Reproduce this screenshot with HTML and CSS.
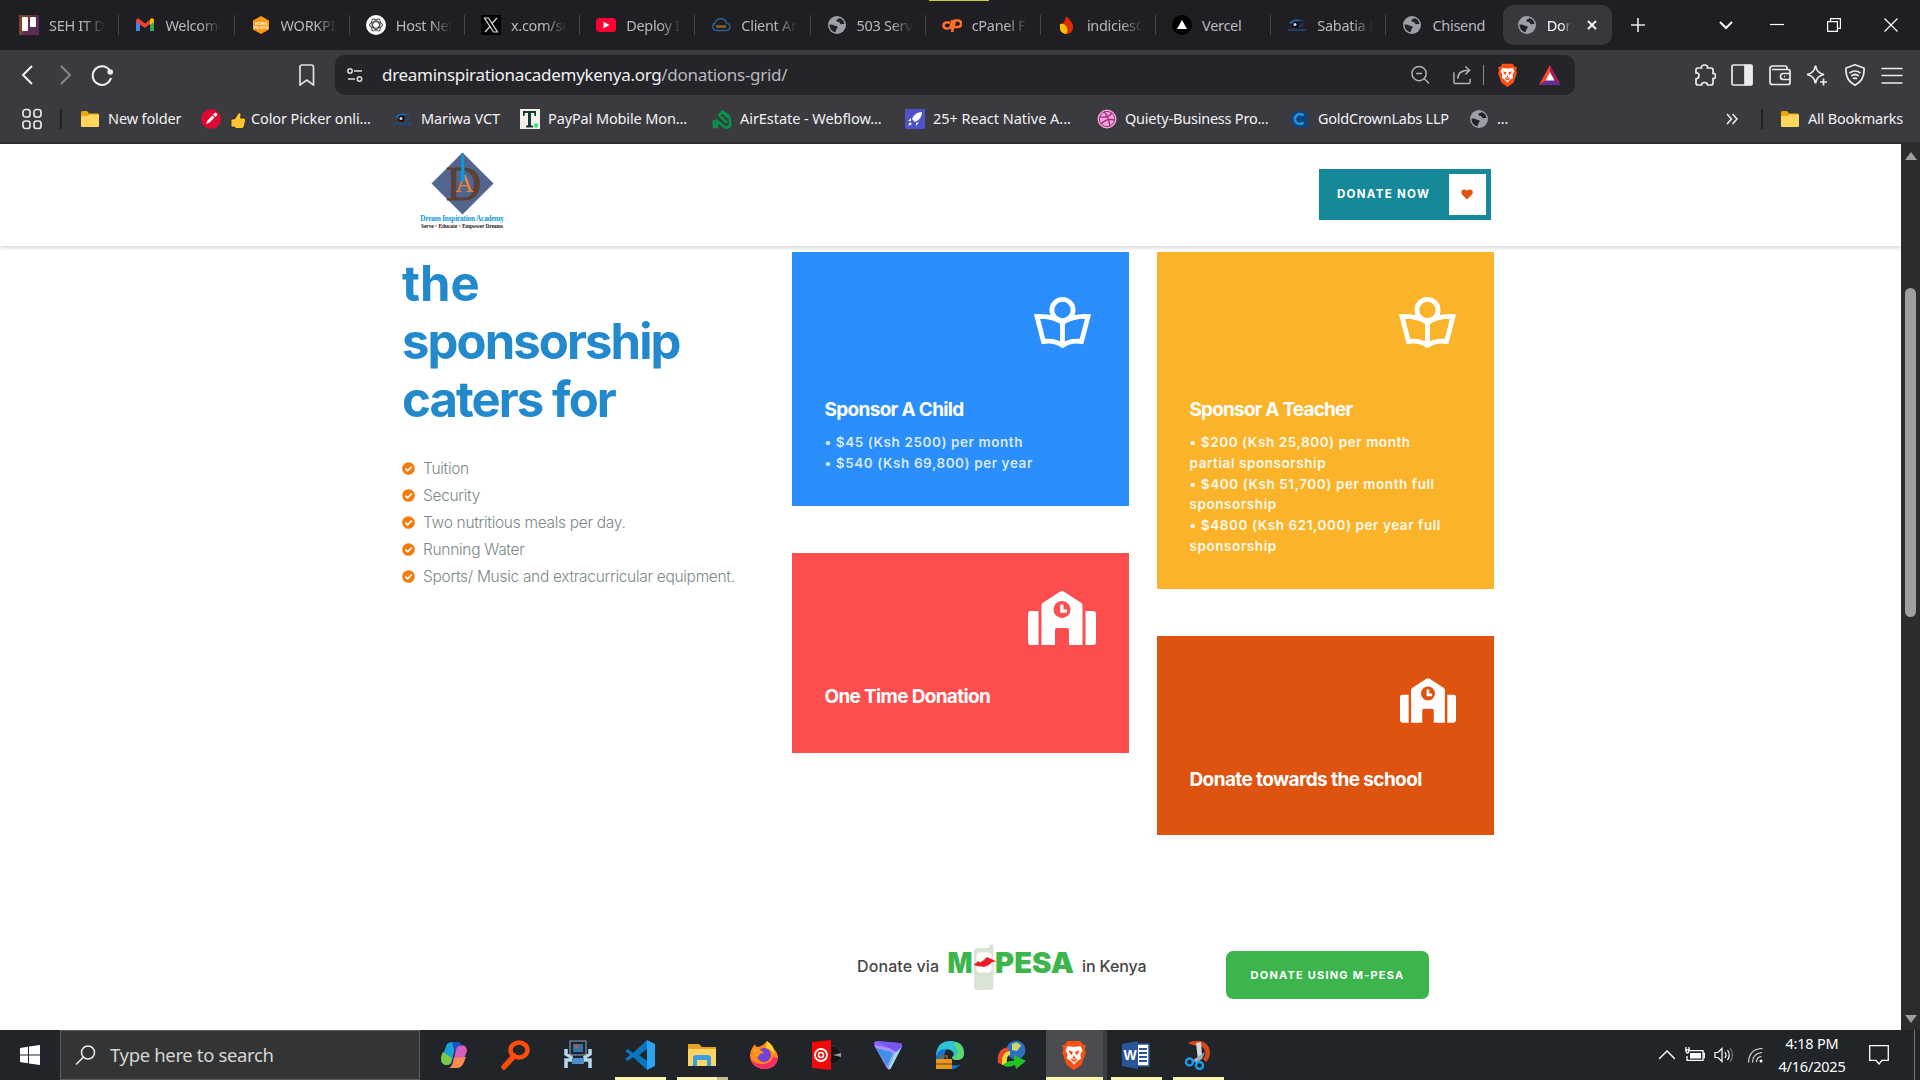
FILE: index.html
```html
<!DOCTYPE html>
<html lang="en">
<head>
<meta charset="utf-8">
<title>Donations Grid</title>
<link rel="stylesheet" href="styles.css">
</head>
<body>
<svg class="defs" aria-hidden="true">
  <symbol id="globe" viewBox="0 0 20 20"><circle cx="10" cy="10" r="9" fill="#9aa0a6"/><path d="M2.5 9.5c2 .2 4 0 5 1 .8.8 2.800.3 3.200 1.500.3 1.200-1.200 1.500-1.500 2.800-.2 1-.3 2-1 2.500A7.500 7.500 0 0 1 2.500 9.500zM12.500 3c-.5 1.200-2.500.8-3 2-.4 1.200.8 2 2 2 1.500.2 1.200 1.800 2.500 2.200 1.200.3 2.500-.5 3.500 0A7.500 7.500 0 0 0 12.500 3z" fill="#242329"/></symbol>
  <symbol id="folder" viewBox="0 0 20 20"><path d="M1 3.500Q1 2 2.500 2H7l2 2.500h9Q19 4.500 19 6v10.500q0 1.500-1.500 1.500h-15Q1 18 1 16.500z" fill="#e8a90c"/><path d="M1 8q0-1 1-1h6l2-1.500h8q1 0 1 1v10q0 1.500-1.500 1.500h-15Q1 18 1 16.500z" fill="#ffd75e"/></symbol>
  <symbol id="eye" viewBox="0 0 20 20"><path d="M2 8Q8 2 18 6 11 4 6 9z" fill="#1c6fc0"/><circle cx="8.500" cy="9.500" r="3.200" fill="#0b1118"/><circle cx="8" cy="9.500" r="1.500" fill="#d5dde3"/><path d="M12 11q3-1 5-4-1 5-5 5z" fill="#1c4f86"/><path d="M1 15h18" stroke="#1b4e86" stroke-width="1.500"/></symbol>
  <symbol id="book" viewBox="0 0 57 51"><g fill="none" stroke="#fff" stroke-width="4.800"><circle cx="28.500" cy="13" r="10.600"/><path d="M28.500 25.500Q19 19 3 19.500L9.500 44.500Q21 43 28.500 48.500 36 43 47.500 44.500L54 19.500Q38 19 28.500 25.500zM28.500 25v23"/></g></symbol>
  <symbol id="school" viewBox="0 0 68 54"><path fill="#fff" fill-rule="evenodd" d="M3 20h7.500v34H3q-3 0-3-3V23q0-3 3-3zM57.500 20H65q3 0 3 3v28q0 3-3 3h-7.500zM13.500 54V14.500q0-2 1.700-3.100L32 .7q2-1.200 4 0l16.800 10.700q1.700 1.100 1.700 3.100V54H41V39q0-2-2-2H29q-2 0-2 2v15zM34 10a8.500 8.500 0 1 0 0 17 8.500 8.500 0 0 0 0-17zM32.300 13.500h3.200v5h3.500v3.200h-6.700z"/></symbol>
  <symbol id="check" viewBox="0 0 14 14"><circle cx="7" cy="7" r="6.800" fill="#f57c0a"/><path d="M3.600 7.200 6 9.500l4.500-4.600" fill="none" stroke="#fff" stroke-width="1.900"/></symbol>
  <symbol id="lion" viewBox="0 0 24 28"><path d="M6 1h12l2 3 3 1-1 4 1 3-4 11-7 5-7-5L1 12l1-3-1-4 3-1z" fill="#fb4f14"/><path d="M6 5.500l4 .8h4l4-.8 2 4-2 4 .5 4-3.500 2-3 3.500-3-3.500-3.500-2 .5-4-2-4z" fill="#fff"/><path d="M7 9.500l4 1.500-1 3-2-1.500zM17 9.500 13 11l1 3 2-1.500zM12 14l1.500 3.500h-3zM8.500 17l3.500 1.500 3.500-1.500-2 3h-3z" fill="#fb4f14"/></symbol>
</svg>

<nav class="tabs">
  <div class="tab"><svg class="fav" viewBox="0 0 20 20"><path d="M0 0h20v20H0z" fill="#5b2a55"/><path d="M0 0h12L3 20H0z" fill="#7b4030"/><rect x="3" y="2" width="6" height="14" rx="1" fill="#fff"/><rect x="11" y="2" width="6" height="10" rx="1" fill="#fff"/></svg><span class="label">SEH IT D</span></div>
  <div class="tab"><svg class="fav" viewBox="0 0 20 20"><path d="M1 4v12h4V8z" fill="#4285f4"/><path d="M19 4v12h-4V8z" fill="#34a853"/><path d="M1 5.500 3 3l7 5.500L17 3v4.500L10 13 1 7z" fill="#ea4335"/><path d="M15 4.500Q18 2 19 5v2l-4 3z" fill="#fbbc04"/></svg><span class="label">Welcome</span></div>
  <div class="tab"><svg class="fav" viewBox="0 0 20 20"><path d="M10 1l8 4.500v9L10 19l-8-4.500v-9z" fill="#fb9a0c"/><text x="10" y="9.500" text-anchor="middle" class="fav-text">WORK</text><text x="10" y="14" text-anchor="middle" class="fav-text">PILOTS</text></svg><span class="label">WORKPI</span></div>
  <div class="tab"><svg class="fav" viewBox="0 0 20 20"><circle cx="10" cy="10" r="10" fill="#fff"/><g fill="none" stroke="#333" stroke-width="1"><ellipse cx="10" cy="10" rx="6.500" ry="3.300"/><ellipse cx="10" cy="10" rx="6.500" ry="3.300" transform="rotate(60 10 10)"/><ellipse cx="10" cy="10" rx="6.500" ry="3.300" transform="rotate(120 10 10)"/></g></svg><span class="label">Host Net</span></div>
  <div class="tab"><svg class="fav" viewBox="0 0 20 20"><path d="M0 0h20v20H0z"/><path d="M3.500 3h4l9 14h-4zM16 3l-5.500 6M4 17l5.500-6" fill="none" stroke="#ddd" stroke-width="1.200"/></svg><span class="label">x.com/se</span></div>
  <div class="tab"><svg class="fav" viewBox="0 0 20 20"><rect y="3" width="20" height="14" rx="3.500" fill="#ff0033"/><path d="M7.500 6.700v6.600l6-3.300z" fill="#fff"/></svg><span class="label">Deploy I</span></div>
  <div class="tab"><svg class="fav" viewBox="0 0 20 20"><path d="M5 15.500a4 4 0 0 1-1-7.500q2-4.500 6-4.500 4.500.5 5.500 4.500 3.500.8 3.500 4-.3 3-3.500 3.500z" fill="none" stroke="#2a628f" stroke-width="1.400"/><path d="M5 11.500h10" stroke="#946024" stroke-width="2.500"/></svg><span class="label">Client Ar</span></div>
  <div class="tab"><svg class="fav"><use href="#globe"/></svg><span class="label">503 Serv</span></div>
  <div class="tab"><svg class="fav" viewBox="0 0 20 20"><path d="M8 7.500H4.500a3 3 0 0 0 0 6H7M10 17l3-11.500h3a3.200 3.200 0 0 1 0 6.500h-3.500M8 14l2.500-9" fill="none" stroke="#ff6c2c" stroke-width="2.700"/></svg><span class="label">cPanel F</span></div>
  <div class="tab"><svg class="fav" viewBox="0 0 20 20"><path d="M9 1q8 7 7 12-1 6-7 6-6-1-6-6 0-3 3-5 3-3 3-7z" fill="#dd2c00"/><path d="M3 9q5-1 7 4 1 4-1 6-6-1-6-6z" fill="#ffc400"/></svg><span class="label">indiciesG</span></div>
  <div class="tab"><svg class="fav" viewBox="0 0 20 20"><circle cx="10" cy="10" r="10"/><path d="M10 5l5 9H5z" fill="#fff"/></svg><span class="label">Vercel</span></div>
  <div class="tab"><svg class="fav"><use href="#eye"/></svg><span class="label">Sabatia E</span></div>
  <div class="tab last"><svg class="fav"><use href="#globe"/></svg><span class="label">Chisend</span></div>
  <div class="tab active"><svg class="fav"><use href="#globe"/></svg><span class="label">Don</span><svg class="x" viewBox="0 0 10 10"><path d="M1 1l8 8M9 1 1 9" stroke="#fff" stroke-width="1.900"/></svg></div>
  <svg class="plus" viewBox="0 0 14 14"><path d="M7 0v14M0 7h14" stroke="#e8e8ea" stroke-width="1.600"/></svg>
  <div class="window-buttons">
    <svg viewBox="0 0 14 14"><path d="M1 4l6 6 6-6" fill="none" stroke="#fff" stroke-width="2"/></svg>
    <svg viewBox="0 0 14 14"><path d="M0 6.500h14" stroke="#fff" stroke-width="1.200"/></svg>
    <svg viewBox="0 0 14 14"><path d="M.6 3.600h9.800v9.800H.6zM3.500 3.500V.6h9.900v9.800h-3" fill="none" stroke="#fff" stroke-width="1.200"/></svg>
    <svg viewBox="0 0 14 14"><path d="M.5.500l13 13M13.500.500l-13 13" stroke="#fff" stroke-width="1.200"/></svg>
  </div>
  <i class="top-mark"></i>
</nav>

<section class="chrome">
  <div class="toolbar">
    <svg class="i-back" viewBox="0 0 22 22"><path d="M15 2 6 11l9 9" fill="none" stroke="#f0f0f2" stroke-width="2"/></svg>
    <svg class="i-fwd" viewBox="0 0 22 22"><path d="M7 2l9 9-9 9" fill="none" stroke="#86868b" stroke-width="2"/></svg>
    <svg class="i-reload" viewBox="0 0 22 22"><path d="M20 14a9.300 9.300 0 1 1-1.500-8" fill="none" stroke="#f0f0f2" stroke-width="2"/><circle cx="19.200" cy="8" r="2.800" fill="#f0f0f2"/></svg>
    <svg class="i-mark" viewBox="0 0 22 22"><path d="M4 3q0-2 2-2h9.500q2 0 2 2v18l-6.700-5L4 21z" fill="none" stroke="#e0e0e3" stroke-width="1.700"/></svg>
    <div class="omnibox">
      <svg class="i-tune" viewBox="0 0 16 16"><g fill="none" stroke="#dcdce0" stroke-width="1.500"><circle cx="3" cy="4" r="2.200"/><path d="M7 4h8M1 12h7"/><circle cx="12.500" cy="12" r="2.200"/></g></svg>
      <span class="url">dreaminspirationacademykenya.org<em>/donations-grid/</em></span>
      <svg class="i-zoom" viewBox="0 0 20 20"><g fill="none" stroke="#b4b4b9" stroke-width="1.500"><circle cx="8.500" cy="8.500" r="7.500"/><path d="M14 14l5 5M5.500 8.500h6"/></g></svg>
      <svg class="i-share" viewBox="0 0 20 20"><path d="M1 7v10q0 2 2 2h13q2 0 2-2v-3M5 14q0-9 12-9M13 1l4.500 4-4.500 4.500" fill="none" stroke="#b4b4b9" stroke-width="1.500"/></svg>
      <i class="omni-sep"></i>
      <svg class="i-lion"><use href="#lion"/></svg>
      <svg class="i-bat" viewBox="0 0 22 20"><path d="M11 0 0 20l11-7z" fill="#ff4724"/><path d="M11 0l11 20-11-7z" fill="#9e1f63"/><path d="M0 20h22l-11-7z" fill="#662d91"/><path d="M11 7l4.500 8.500h-9z" fill="#fff"/></svg>
    </div>
    <div class="tools">
      <svg viewBox="0 0 22 22"><path d="M2 6q0-2 2-2h3.500Q7 1 10.500 1 14 1 13.500 4H17q2 0 2 2v3.500q2.500-.3 2.500 2.500t-2.500 2.500V19q0 2-2 2h-3.500q0-2.500-3-2.500t-3 2.500H4q-2 0-2-2v-4q3-.5 3-3.500T2 9z"/></svg>
      <svg viewBox="0 0 22 22"><rect x="1" y="1" width="20" height="20" rx="1.500"/><path d="M14 1.500h6.500v19H14z" fill="#ececf0"/></svg>
      <svg viewBox="0 0 22 22"><path d="M18 5V4q0-2-2-2H4Q1 2 1 4.500V18q0 2.500 2.500 2.500H19q2 0 2-2V7.500q0-2-2-2H3M21 9.500h-7q-2.500 0-2.500 3t2.500 3h7M15 12.500h1"/></svg>
      <svg viewBox="0 0 22 22"><path d="M9.500 1.500Q10.500 9 18 10.500 10.500 12 9.500 19.500 8.500 12 1 10.500 8.500 9 9.500 1.500zM17.500 14.500v7M14 18h7"/></svg>
      <svg viewBox="0 0 22 22"><path d="M11 .8l9 3.200q1 12-9 17.200Q1 16 2 4zM5.500 9q5.500-4 11 0M7.300 12q3.700-3 7.400 0M9 14.800q2-1.500 4 0"/></svg>
      <svg viewBox="0 0 22 22"><path d="M.5 4.500h21M.5 11.500h21M.5 19h21"/></svg>
    </div>
  </div>
  <div class="bookmarks">
    <svg class="i-apps" viewBox="0 0 20 22"><g fill="none" stroke="#e6e6ea" stroke-width="1.700"><rect x="1" y="1.500" width="7" height="7.500" rx="2.500"/><rect x="12" y="1.500" width="7" height="7.500" rx="2.500"/><rect x="1" y="13" width="7" height="7.500" rx="2.500"/><rect x="12" y="13" width="7" height="7.500" rx="2.500"/></g></svg>
    <i class="bar-sep"></i>
    <div class="bm b1"><svg><use href="#folder"/></svg><span>New folder</span></div>
    <div class="bm b2"><svg viewBox="0 0 20 20"><circle cx="10" cy="10" r="10" fill="#dc0a33"/><path d="M5 15l1.500-3.500 5-5 2 2-5 5zM12 5.500l2.500-2 2 2-2 2.500z" fill="#fff"/></svg><svg class="thumb" viewBox="0 0 16 18"><path d="M1 8h3.500L9 1.500q3 0 1.500 5.500H14q2 .5 1.500 3l-1.500 6q-.5 1.500-2 1.500H6L4.500 16H1z" fill="#fcc531" stroke="#242329" stroke-width=".8"/></svg><span>Color Picker onli...</span></div>
    <div class="bm b3"><svg><use href="#eye"/></svg><span>Mariwa VCT</span></div>
    <div class="bm b4"><svg viewBox="0 0 20 20"><path d="M0 0h20v20H0z" fill="#f4f0ea"/><path d="M3 2h13v5h-1.500L14 4h-3v12l2 1v1.500H6V17l2-1V4H5l-.5 3H3z" fill="#123c34"/><circle cx="16" cy="16.500" r="2.200" fill="#36e07c"/></svg><span>PayPal Mobile Mon...</span></div>
    <div class="bm b5"><svg viewBox="0 0 20 20"><path d="M2 11v7h3v-6l9 7 4-2v-7L10 3 7 6l8 8M10 2l8 6" fill="none" stroke="#079449" stroke-width="2.600"/></svg><span>AirEstate - Webflow...</span></div>
    <div class="bm b6"><svg viewBox="0 0 20 20"><rect width="20" height="20" rx="1" fill="#5052c9"/><path d="M17 3q-7 0-10 7l3 3q7-3 7-10zM6 9l-3 3h3zM11 14v3l3-4zM5 13l-2 4 4-2z" fill="#fff"/></svg><span>25+ React Native A...</span></div>
    <div class="bm b7"><svg viewBox="0 0 20 20"><circle cx="10" cy="10" r="9" fill="#f3a6dc" stroke="#f5aee0"/><path d="M3 8q8 1 12-4M7 2.500q5 6 6 15M4 15q5-6 14-4" fill="none" stroke="#a62c80" stroke-width="1.300"/><circle cx="10" cy="10" r="7.600" fill="none" stroke="#a62c80"/></svg><span>Quiety-Business Pro...</span></div>
    <div class="bm b8"><svg viewBox="0 0 20 20"><circle cx="9.500" cy="10" r="9" fill="#0e4478"/><path d="M14 15h5v4h-5z" fill="#0e4478"/><path d="M13.500 6.500a5 5 0 1 0 0 7" fill="none" stroke="#2b8fe0" stroke-width="2.600"/></svg><span>GoldCrownLabs LLP</span></div>
    <div class="bm b9"><svg><use href="#globe"/></svg><span>...</span></div>
    <svg class="i-more" viewBox="0 0 12 12"><path d="M1 1l4.500 5L1 11M6.500 1 11 6l-4.500 5" fill="none" stroke="#eee" stroke-width="1.600"/></svg>
    <i class="bar-sep"></i>
    <div class="bm b10"><svg><use href="#folder"/></svg><span>All Bookmarks</span></div>
  </div>
</section>

<div class="viewport">
  <main class="page">
    <header class="site-header">
      <div class="logo">
        <svg viewBox="0 0 64 64"><path d="M32 .5 63.500 32 32 63.500.5 32z" fill="#52658f"/><text x="33" y="49" text-anchor="middle" class="logo-d">D</text><text x="34" y="40.500" text-anchor="middle" class="logo-a">A</text><path d="M31.200 1h1.800l1.500 28-4.500 1z" fill="#0a98de"/></svg>
        <span class="logo-name">Dream Inspiration Academy</span>
        <span class="logo-tag">Serve <b>•</b> Educate <b>•</b> Empower Dreams</span>
      </div>
      <a class="donate"><span>DONATE NOW</span><i><svg viewBox="0 0 12 11"><path d="M6 10.500 1 5.500Q-.5 3 1 1.300 3.500-.7 6 1.800 8.500-.7 11 1.300q1.500 1.700 0 4.200z" fill="#de5310"/></svg></i></a>
    </header>
    <div class="content">
      <aside class="intro">
        <h1><span class="the">the</span> sponsorship caters for</h1>
        <ul>
          <li><svg><use href="#check"/></svg><span>Tuition</span></li>
          <li><svg><use href="#check"/></svg><span>Security</span></li>
          <li><svg><use href="#check"/></svg><span>Two nutritious meals per day.</span></li>
          <li><svg><use href="#check"/></svg><span>Running Water</span></li>
          <li><svg><use href="#check"/></svg><span>Sports/ Music and extracurricular equipment.</span></li>
        </ul>
      </aside>
      <div class="column">
        <article class="card blue"><svg class="book"><use href="#book"/></svg><h2>Sponsor A Child</h2><p>• $45 (Ksh 2500) per month<br>• $540 (Ksh 69,800) per year</p></article>
        <article class="card red"><svg class="school"><use href="#school"/></svg><h2>One Time Donation</h2></article>
      </div>
      <div class="column">
        <article class="card yellow"><svg class="book"><use href="#book"/></svg><h2>Sponsor A Teacher</h2><p>• $200 (Ksh 25,800) per month<br>partial sponsorship<br>• $400 (Ksh 51,700) per month full<br>sponsorship<br>• $4800 (Ksh 621,000) per year full<br>sponsorship</p></article>
        <article class="card orange"><svg class="school"><use href="#school"/></svg><h2>Donate towards the school</h2></article>
      </div>
    </div>
    <footer class="mpesa">
      <span class="via">Donate via</span>
      <svg class="mpesa-logo" viewBox="0 0 127 46"><path d="M26 7q0-3 3-3h12.500V1.500Q41.500.5 43.500.5t2 1V43q0 3-3 3H29q-3 0-3-3z" fill="#d9e4d4"/><rect x="28.500" y="8.500" width="15" height="20" rx="3.500" fill="#fff"/><text x="-.5" y="29" class="mp" textLength="25" lengthAdjust="spacingAndGlyphs">M</text><text x="47" y="29" class="mp" textLength="79" lengthAdjust="spacingAndGlyphs">PESA</text><path d="M25.500 21l5-4 1.500 1.500q4-2 7-5.500 4 1.500 9.500 4.500l-4.500.5q-4 5-9 4.800-4 0-9.500-1.800z" fill="#ec1c24"/></svg>
      <span class="kenya">in Kenya</span>
      <a class="mpesa-btn">DONATE USING M-PESA</a>
    </footer>
  </main>
  <div class="scrollbar"><i class="up"></i><i class="bar"></i><i class="down"></i></div>
</div>

<div class="taskbar">
  <svg class="start" viewBox="0 0 20 20"><path d="M0 3l8-1.200v7.700H0zM9 1.600 20 0v9.500H9zM0 10.500h8v7.700L0 17zM9 10.500h11V20L9 18.400z" fill="#fff"/></svg>
  <div class="search"><svg viewBox="0 0 20 20"><circle cx="12.500" cy="7.500" r="6.500" fill="none" stroke="#eee" stroke-width="1.500"/><path d="M8 12l-7.500 7.500" stroke="#eee" stroke-width="1.500"/></svg><span>Type here to search</span></div>
  <div class="apps">
    <div class="app"><svg viewBox="0 0 30 30"><path d="M8 4q2-2 5-2h7q-3 1-4 6l-3 13q-1 4-5 4-6 0-6-6z" fill="#18a0dc"/><path d="M2 18q1-5 2-6l9 6-1 4q-1 3-4 3-6 0-6-7z" fill="#7cc84a"/><path d="M22 26q-2 2-5 2h-7q3-1 4-6l3-13q1-4 5-4 6 0 6 6z" fill="#d65cc0"/><path d="M10 28q3-1 4-6l1-4 12-1-2 5q-2 6-8 6z" fill="#fb8b4e"/><path d="M13 2h6q3 0 4 4-5-1-6 4l-1 3z" fill="#1f50bf"/></svg></div>
    <div class="app"><svg viewBox="0 0 30 30"><ellipse cx="18" cy="10" rx="8.500" ry="7.500" fill="none" stroke="#ff4b0c" stroke-width="4.500"/><path d="M13 16 3 27" stroke="#ff4b0c" stroke-width="5.500" stroke-linecap="round"/></svg></div>
    <div class="app"><svg viewBox="0 0 30 30"><path d="M3 9v5l5 3v3H3v8M27 9v5l-5 3v3h5v8" fill="none" stroke="#b8d8f2" stroke-width="3.500"/><rect x="7" y="1" width="16" height="14" fill="#1c2530" stroke="#94a5b8"/><path d="M10 4h10v8H10z" fill="#3474a4"/><path d="M12 5h3v3h-3z" fill="#df4b32"/><path d="M9 18h12v6H9z" fill="#4d8bc9"/></svg></div>
    <div class="app on"><svg viewBox="0 0 30 30"><path d="M22 0 8 13 3 9 0 11l5 4-5 4 3 2 5-4 14 13z" fill="#0a75c0"/><path d="M22 0l8 4v22l-8 4z" fill="#2ba4f0"/><path d="M22 9v12l-8-6z" fill="#212428"/></svg></div>
    <div class="app on multi"><svg viewBox="0 0 30 30"><path d="M1 4h11l3 3h14v19H1z" fill="#e8a420"/><path d="M1 9h28v17H1z" fill="#fdd567"/><path d="M6 26v-8q0-3 3-3h12q3 0 3 3v8h-4v-6H10v6z" fill="#3c9de0"/></svg></div>
    <div class="app"><svg viewBox="0 0 30 30"><path d="M18 1q6 4 7 8 4 4 4 9-1 10-13 11Q2 28 1 16q0-6 5-12 0 3 3 3 5-1 9-6z" fill="#ff8b16"/><path d="M1 16q2 8 12 8 9 0 11-7l5 1q-1 10-13 11Q2 28 1 16z" fill="#f82d66"/><circle cx="15" cy="15" r="7" fill="#7540d3"/><path d="M18 1q8 6 7 14-2-6-8-7z" fill="#ffd936"/><path d="M4 9q6-1 11 4-5 0-6 4-4-2-5-8z" fill="#ff9b14"/></svg></div>
    <div class="app"><svg viewBox="0 0 30 30"><circle cx="21" cy="15" r="9" fill="#151515" stroke="#333"/><path d="M22 15l8-2v4z" fill="#999"/><path d="M1 2 20 0v30L1 28z" fill="#f50808"/><circle cx="10" cy="15" r="6" fill="none" stroke="#fff" stroke-width="1.800"/><circle cx="10" cy="15" r="2.500" fill="none" stroke="#fff" stroke-width="1.600"/></svg></div>
    <div class="app"><svg viewBox="0 0 30 30"><path d="M1 4q0-3 3-3l22 2q4 0 3 4L18 28q-2 3-4 0z" fill="#8468f8"/><path d="M1 5l20 4q3 1 2 4l-6 15q-2 1-3 0z" fill="#a794ff"/><path d="M3 8l15 4q2 1 1 3l-5 11z" fill="#3e8fe8"/><path d="M29 6 18 28q-1 2-3 1l7-16z" fill="#8fe8e0"/><path d="M4 1l22 2q4 0 3 4l-6 5z" fill="#7656f0"/></svg></div>
    <div class="app"><svg viewBox="0 0 30 30"><path d="M1 14Q3 0 17 1q12 1 12 12 0 7-7 7-5 0-5-3 3-2 1-5-3-4-9-2Q3 12 1 18z" fill="#2fc1d8"/><path d="M20 2q9 3 9 11 0 7-7 7-5 0-5-3 4 1 5-4t-3-8z" fill="#5fd96c"/><path d="M1 16Q4 8 11 10q-5 9 3 14 6 3 12 0-5 6-11 5Q2 28 1 16z" fill="#1377cf"/><rect x="1" y="19" width="16" height="10" fill="#e6971e"/><path d="M6 19v-3h6v3M1 24h16" fill="none" stroke="#9c5c10" stroke-width="1.500"/></svg></div>
    <div class="app"><svg viewBox="0 0 30 30"><circle cx="19" cy="10" r="9.500" fill="#2c6ec2"/><path d="M15 4q6-4 9 2l-4 5-5-1z" fill="#cad96a"/><path d="M1 23Q-1 9 11 7l1 4Q5 13 6 25z" fill="#e24a28"/><path d="M5 25Q4 12 13 11v4Q9 15 10 24z" fill="#f7d53a"/><path d="M7 24q5-4 10-3v-6l12 6-10 8-1-4q-6 3-11 1z" fill="#22c425"/></svg></div>
    <div class="app on focus"><svg class="task-lion"><use href="#lion"/></svg></div>
    <div class="app on"><svg viewBox="0 0 30 30"><path d="M15 4h13v22H15z" fill="#fff" stroke="#2a5699" stroke-width="1.500"/><path d="M18 9h8M18 13h8M18 17h8M18 21h8" stroke="#2a5699" stroke-width="2"/><path d="M1 4 17 1v28L1 26z" fill="#2a5699"/><text x="9" y="20" text-anchor="middle" class="word-w">W</text></svg></div>
    <div class="app on"><svg viewBox="0 0 30 30"><path d="M5 3Q10 0 18 1q9 3 9 11 0 6-4 10l-3-3q3-4 2-8-2-5-6-5Q8 5 5 3z" fill="#d64818"/><path d="M13 3l5-1 1 13-4 5z" fill="#d4d9dd"/><path d="M10 20l12-8-3 7-6 4z" fill="#9faab2"/><g fill="none" stroke="#1d9bea" stroke-width="2.500"><circle cx="6.500" cy="22" r="3.500"/><circle cx="16.500" cy="25.500" r="3.500"/></g></svg></div>
  </div>
  <div class="tray">
    <svg class="t-up" viewBox="0 0 16 16"><path d="M0 12l8-8 8 8" fill="none" stroke="#fff" stroke-width="1.400"/></svg>
    <svg class="t-bat" viewBox="0 0 20 16"><path d="M5 3.700h13v9.600H2V9M18 6.500h1.500v4H18M0 3h5M1 0v3M4 0v3M1 3q0 3 1.500 3T4 3" fill="none" stroke="#fff" stroke-width="1.300"/><path d="M5 6h11v5.500H5z" fill="#fff"/></svg>
    <svg class="t-vol" viewBox="0 0 20 16"><path d="M1 5.500h3l4-4v13l-4-4H1zM11 5q2 3 0 6M13.500 3q3.500 5 0 10" fill="none" stroke="#fff" stroke-width="1.200"/><path d="M16 1q5 7 0 14" fill="none" stroke="#777" stroke-width="1.200"/></svg>
    <svg class="t-wifi" viewBox="0 0 16 16"><circle cx="14" cy="14" r="1.500" fill="#fff"/><path d="M9.500 15q0-5 5-5.500M5.500 15.500q0-9 9.500-10M1.500 15.500Q2 2 15.500 1.500" fill="none" stroke="#ddd" stroke-width="1.200"/></svg>
    <div class="clock"><span>4:18 PM</span><span>4/16/2025</span></div>
    <svg class="t-note" viewBox="0 0 20 20"><path d="M.7.700h18.600v14.600H13L10 19l-3-3.700H.7z" fill="none" stroke="#fff" stroke-width="1.300"/></svg>
    <i class="peek"></i>
  </div>
</div>
</body>
</html>
```
FILE: styles.css
```css
* { box-sizing: border-box; }
body { margin: 0; width: 1920px; height: 1080px; overflow: hidden; display: flex; flex-direction: column; background: #fff; font-family: "Noto Sans", "Open Sans", sans-serif; }
svg { flex: none; display: block; }
.defs { position: absolute; width: 0; height: 0; }

/* Tab strip */
.tabs { position: relative; height: 50px; flex: none; display: flex; align-items: center; background: #1f1e23; color: #b9b9bd; font-size: 14.500px; }
.tab { width: 115.200px; height: 40px; padding-left: 19px; display: flex; align-items: center; gap: 10px; position: relative; flex: none; }
.tab:first-child { width: 116.400px; }
.tab::after { content: ""; position: absolute; right: -3px; top: 10px; width: 1px; height: 20px; background: #46454b; }
.tab.last::after, .tab.active::after { display: none; }
.fav { width: 20px; height: 20px; }
.fav-text { font: bold 4px "Liberation Sans", sans-serif; fill: #fff; }
.label { width: 56px; margin-top: -1px; overflow: hidden; white-space: nowrap; letter-spacing: -0.300px; -webkit-mask-image: linear-gradient(90deg, #000 62%, transparent); mask-image: linear-gradient(90deg, #000 62%, transparent); }
.tab:nth-child(11) .label, .tab.last .label { -webkit-mask-image: none; mask-image: none; }
.tab.active { width: 109px; margin-left: 4.200px; padding-left: 14px; border-radius: 10px; background: #38373c; color: #fff; }
.tab.active .label { width: 24px; }
.x { width: 10px; height: 10px; margin-left: 6px; }
.plus { width: 14px; height: 14px; margin-left: 19px; }
.window-buttons { display: flex; gap: 43px; margin-left: auto; padding-right: 22px; }
.window-buttons svg { width: 14px; height: 14px; }
.window-buttons svg:first-child { margin-right: -6px; }
.top-mark { position: absolute; left: 929px; top: 0; width: 60px; height: 1px; background: #c8d02a; }

/* Toolbar and bookmarks */
.chrome { height: 94px; flex: none; background: #3b3a3f; border-bottom: 2px solid #2d2c32; color: #f2f2f4; }
.toolbar { height: 50px; padding: 5px 17px 5px 17px; display: flex; align-items: center; }
.i-back, .i-fwd, .i-reload, .i-mark { width: 22px; height: 22px; }
.i-fwd { margin-left: 15px; }
.i-reload { margin-left: 15px; }
.i-mark { margin-left: 183px; }
.omnibox { width: 1240px; height: 40px; margin-left: 17px; padding: 0 14px 0 12px; border-radius: 10px; background: #252429; display: flex; align-items: center; }
.i-tune { width: 16px; height: 16px; }
.url { margin: -2px auto 0 19px; font-size: 17px; letter-spacing: -0.300px; white-space: nowrap; color: #f0f0f2; }
.url em { font-style: normal; color: #b9b9be; }
.i-zoom, .i-share { width: 19px; height: 20px; }
.i-share { margin-left: 23px; }
.omni-sep { width: 1px; height: 20px; margin: 0 13px 0 11px; background: #8a8a8f; }
.i-lion { width: 21px; height: 24px; }
.i-bat { width: 22px; height: 20px; margin-left: 21px; }
.tools { display: flex; gap: 15.500px; margin-left: auto; }
.tools svg { width: 22px; height: 22px; fill: none; stroke: #ececf0; stroke-width: 1.700; }
.bookmarks { height: 38px; padding-left: 22px; display: flex; align-items: center; font-size: 14.500px; white-space: nowrap; }
.i-apps { width: 20px; height: 22px; }
.bar-sep { width: 2px; height: 20px; margin: 0 18px; background: #222126; }
.bm { display: flex; align-items: center; gap: 8px; letter-spacing: -0.120px; }
.bm span { margin-top: -2px; }
.bm svg { width: 20px; height: 20px; }
.bm .thumb { width: 16px; height: 18px; margin: 2px -3px 0 1px; }
.b1 { width: 121px; }
.b2 { width: 192px; }
.b3 { width: 127px; }
.b4 { width: 192px; }
.b5 { width: 193px; letter-spacing: -0.060px; }
.b6 { width: 192px; letter-spacing: -0.020px; }
.b7 { width: 193px; letter-spacing: -0.220px; }
.b8 { width: 179px; letter-spacing: -0.250px; }
.b9 { width: 257px; }
.b10 { margin-left: -1px; letter-spacing: -0.200px; }
.i-more { width: 12px; height: 12px; margin-right: 5px; }

/* Page */
.viewport { height: 886px; flex: none; display: flex; }
.page { width: 1901px; background: #fff; font-family: Inter, sans-serif; }
.site-header { height: 102px; padding: 8px 410px 0 421px; display: flex; justify-content: space-between; align-items: flex-start; box-shadow: 0 2px 4px rgba(0, 0, 0, .16); }
.logo { width: 82px; display: flex; flex-direction: column; align-items: center; font-family: "Liberation Serif", serif; white-space: nowrap; }
.logo svg { width: 63px; height: 63px; }
.logo-d { font: 50px "Liberation Serif", serif; fill: #5b4034; stroke: #5b4034; stroke-width: .8; }
.logo-a { font: 26px "Liberation Serif", serif; fill: #ee8432; }
.logo-name { font-size: 7.300px; line-height: 8px; font-weight: bold; color: #0f97d8; letter-spacing: -0.200px; }
.logo-tag { font-size: 5.500px; line-height: 6px; font-weight: bold; color: #222; letter-spacing: -0.100px; }
.logo-tag b { color: #ee8432; font-size: 7px; line-height: 1px; }
.donate { width: 172px; height: 51px; margin-top: 17px; padding: 5px 5px 5px 18px; display: flex; align-items: center; justify-content: space-between; background: #158999; color: #fff; font-size: 11.500px; font-weight: 700; letter-spacing: 1.300px; white-space: nowrap; }
.donate span { padding-bottom: 1px; }
.donate i { width: 37px; height: 41px; padding-right: 1px; background: #fff; display: grid; place-items: center; }
.donate svg { width: 12px; height: 11px; }
.content { height: 673px; padding: 6px 0 0 402px; display: flex; }
.intro { width: 390px; }
h1 { width: 300px; margin: 3px 0 0; font-size: 49px; line-height: 57.800px; font-weight: 700; letter-spacing: -1.900px; color: #2289cc; }
.the { letter-spacing: 0; }
.intro ul { list-style: none; margin: 27px 0 0; padding: 0; color: #7a8989; font-size: 15.500px; font-weight: 300; }
.intro li { height: 27px; display: flex; align-items: center; gap: 8px; letter-spacing: -0.300px; white-space: nowrap; }
.intro li svg { width: 13px; height: 13px; }
.column { width: 337px; margin-right: 28px; display: flex; flex-direction: column; gap: 47px; }
.card { padding: 0 33px 0 32.500px; color: #fff; display: flex; flex-direction: column; }
.card svg { align-self: flex-end; }
.card h2 { margin: 1px 0 0; font-size: 19px; line-height: 26px; font-weight: 700; letter-spacing: -0.680px; white-space: nowrap; }
.card p { margin: 9px 0 0; font-size: 13.500px; line-height: 20.800px; font-weight: 600; letter-spacing: .570px; color: rgba(255, 255, 255, .82); white-space: nowrap; }
.yellow p { color: #fffaf0; }
.blue { height: 254px; background: #2a8ffc; }
.red { height: 200px; background: #fd4e4f; }
.yellow { height: 337px; background: #fbb32a; }
.yellow h2 { letter-spacing: -0.820px; }
.orange { height: 199px; background: #de5310; }
.orange h2 { letter-spacing: -0.600px; }
.book { width: 57px; height: 51px; margin: 45px 5px 48px 0; }
.red .school { width: 68px; height: 54px; margin: 38px 0 38px; }
.orange .school { width: 56px; height: 45px; margin: 42px 5px 43px 0; }
.mpesa { height: 111px; padding: 0 0 0 857px; display: flex; align-items: center; font-size: 16px; font-weight: 500; color: #454545; white-space: nowrap; }
.mpesa > span { padding-bottom: 18px; letter-spacing: .100px; }
.via { width: 91px; }
.mpesa-logo { width: 127px; height: 46px; margin-bottom: 15px; }
.mp { font: 900 28px "Inter", sans-serif; fill: #3cb64b; }
.kenya { width: 144px; margin-left: 7px; }
.mpesa .kenya { letter-spacing: -0.100px; }
.mpesa-btn { width: 203px; height: 48px; display: grid; place-items: center; border-radius: 7px; background: #3cb54d; color: #fff; font-size: 11px; font-weight: 700; letter-spacing: 1.220px; }
.scrollbar { width: 19px; background: #2c2c2c; display: flex; flex-direction: column; align-items: center; }
.scrollbar .up { border: 6px solid transparent; border-top: 0; border-bottom: 8px solid #9f9f9f; margin-top: 8px; }
.scrollbar .bar { width: 11px; height: 329px; margin-top: 128px; border-radius: 6px; background: #9f9f9f; }
.scrollbar .down { border: 6px solid transparent; border-bottom: 0; border-top: 8px solid #9f9f9f; margin: auto 0 7px; }

/* Taskbar */
.taskbar { height: 50px; flex: none; display: flex; align-items: center; background: #212428; color: #fff; }
.start { width: 20px; height: 20px; margin-left: 20px; }
.search { width: 360px; height: 50px; margin-left: 20px; padding-left: 14px; display: flex; align-items: center; gap: 14px; border: 1px solid #5c5d5f; background: #333435; color: #d6d6d6; font-size: 18.500px; letter-spacing: -0.350px; white-space: nowrap; }
.search span { margin-top: -2px; }
.search svg { width: 21px; height: 20px; }
.apps { display: flex; height: 50px; gap: 11px; margin-left: 8.500px; }
.app { width: 51px; display: grid; place-items: center; position: relative; flex: none; }
.app svg { width: 30px; height: 30px; }
.app.on::after { content: ""; position: absolute; left: 0; bottom: 0; width: 51px; height: 3px; background: #fdf6ae; }
.app.multi::after { background: linear-gradient(90deg, #fdf6ae 40px, #c4c092 40px); }
.app.focus { background: #4a4c4f; width: 57px; margin: 0 -3px; box-shadow: 4px 0 0 #3b3d40; }
.app.focus::after { width: 57px; }
.app .task-lion { width: 26px; height: 30px; }
.word-w { font: bold 14px "Liberation Sans", sans-serif; fill: #fff; }
.tray { margin-left: auto; display: flex; align-items: center; height: 50px; }
.t-up { width: 16px; height: 16px; margin-right: 10px; }
.t-bat { width: 20px; height: 16px; margin-right: 9px; }
.t-vol { width: 20px; height: 16px; margin-right: 13px; }
.t-wifi { width: 16px; height: 16px; margin-right: 13px; }
.clock { width: 72px; text-align: center; font-size: 14.500px; line-height: 23px; letter-spacing: -0.200px; display: flex; flex-direction: column; white-space: nowrap; }
.t-note { width: 20px; height: 20px; margin-left: 21px; }
.peek { width: 1px; height: 50px; margin: 0 5px 0 25px; background: #737477; }
```
